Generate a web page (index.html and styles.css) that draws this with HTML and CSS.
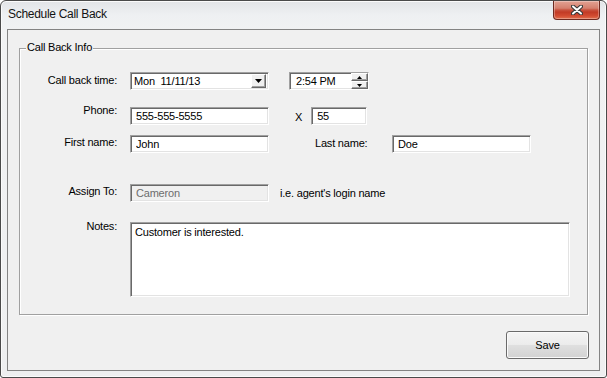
FILE: index.html
```html
<!DOCTYPE html>
<html lang="en">
<head>
<meta charset="utf-8">
<title>Schedule Call Back</title>
<link rel="stylesheet" href="styles.css">
</head>
<body>
<div class="window">
  <div class="titlebar">
    <span class="title">Schedule Call Back</span>
    <button class="close" type="button" aria-label="Close">
      <svg width="12" height="10" viewBox="0 0 12 10"><path d="M2 1.5 L10 8.5 M10 1.5 L2 8.5" stroke="#3a3a3a" stroke-width="4.2" stroke-linecap="round"/><path d="M2 1.5 L10 8.5 M10 1.5 L2 8.5" stroke="#fff" stroke-width="2" stroke-linecap="round"/></svg>
    </button>
  </div>
  <div class="client">
    <div class="group">
      <div class="legend">Call Back Info</div>

      <div class="row row1">
        <label class="lbl lbl1">Call back time:</label>
        <div class="field combo">
          <span class="ctext">Mon  11/11/13</span>
          <span class="rbtn dropbtn"><svg width="7" height="4" viewBox="0 0 7 4"><polygon points="0,0 7,0 3.5,4" fill="#000"/></svg></span>
        </div>
        <div class="field spin">
          <span class="ctext">2:54 PM</span>
          <span class="spinbtns">
            <span class="rbtn sbtn"><svg width="5" height="3" viewBox="0 0 5 3"><polygon points="0,3 5,3 2.5,0" fill="#000"/></svg></span>
            <span class="rbtn sbtn"><svg width="5" height="3" viewBox="0 0 5 3"><polygon points="0,0 5,0 2.5,3" fill="#000"/></svg></span>
          </span>
        </div>
      </div>

      <div class="row row2">
        <label class="lbl lbl2">Phone:</label>
        <input class="field text" type="text" value="555-555-5555">
        <span class="x">X</span>
        <input class="field text ext" type="text" value="55">
      </div>

      <div class="row row3">
        <label class="lbl lbl3">First name:</label>
        <input class="field text" type="text" value="John">
        <label class="lastlbl">Last name:</label>
        <input class="field text" type="text" value="Doe">
      </div>

      <div class="row row4">
        <label class="lbl lbl4">Assign To:</label>
        <input class="field text disabled" type="text" value="Cameron" disabled>
        <span class="hint">i.e. agent's login name</span>
      </div>

      <div class="row row5">
        <label class="lbl lbl5">Notes:</label>
        <textarea class="field notes">Customer is interested.</textarea>
      </div>
    </div>
    <div class="footer">
      <button class="save" type="button">Save</button>
    </div>
  </div>
</div>
</body>
</html>
```
FILE: styles.css
```css
* { box-sizing: border-box; }
html, body { margin: 0; padding: 0; background: #ffffff; }
body {
  font-family: "Liberation Sans", Arial, sans-serif;
  font-size: 11px;
  letter-spacing: -0.2px;
  color: #000;
}

.window {
  width: 607px;
  height: 378px;
  border: 1px solid #4a4a4a;
  border-radius: 6px 6px 3px 3px;
  background: linear-gradient(#e2e4e7 0px, #eef0f2 14px, #f1f2f3 30px, #eeeff0 100%);
  box-shadow: inset 0 0 0 1px #fbfbfb;
  padding: 0 6px 6px 6px;
  display: flex;
  flex-direction: column;
}

.titlebar {
  height: 28px;
  flex: none;
  display: flex;
  justify-content: space-between;
  align-items: flex-start;
}
.title {
  margin: 6px 0 0 1px;
  font-size: 12px;
  line-height: 15px;
  letter-spacing: -0.3px;
  color: #141414;
}
.close {
  width: 47px;
  height: 19px;
  margin: 0;
  padding: 0;
  border: 1px solid #6e2a20;
  border-top: 0;
  border-radius: 0 0 4px 4px;
  background: linear-gradient(#e2a293 0%, #d5806e 40%, #c8523e 50%, #c23b26 62%, #d24b31 82%, #e1704f 100%);
  box-shadow: inset 0 0 0 1px rgba(255, 255, 255, 0.3);
  display: flex;
  align-items: center;
  justify-content: center;
}

.client {
  flex: 1;
  border: 1px solid #838383;
  background: #f0f0f0;
  display: flex;
  flex-direction: column;
}

.group {
  flex: none;
  height: 267px;
  margin: 18px 11px 0 11px;
  border: 1px solid #a0a0a0;
  box-shadow: inset 1px 1px 0 #ffffff, 1px 1px 0 #ffffff;
  display: flex;
  flex-direction: column;
}
.legend {
  align-self: flex-start;
  margin: -8px 0 0 6px;
  padding: 0 1px;
  background: #f0f0f0;
  line-height: 13px;
}

.row {
  flex: none;
  display: flex;
  align-items: flex-start;
  height: 18px;
}
.row1 { margin-top: 18px; }
.row2 { margin-top: 17px; }
.row3 { margin-top: 10px; }
.row4 { margin-top: 31px; }
.row5 { margin-top: 20px; height: 75px; }

.lbl {
  flex: none;
  width: 97px;
  margin-right: 13px;
  text-align: right;
  line-height: 13px;
}
.lbl1 { margin-top: 2px; }
.lbl2 { margin-top: -3px; }
.lbl3 { margin-top: 1px; }
.lbl4 { margin-top: 1px; }
.lbl5 { margin-top: -2px; }

.field {
  flex: none;
  width: 139px;
  height: 18px;
  margin: 0;
  background: #ffffff;
  border: 1px solid;
  border-color: #a0a0a0 #ffffff #ffffff #a0a0a0;
  box-shadow: inset 1px 1px 0 #696969, inset -1px -1px 0 #e3e3e3;
  font: inherit;
  letter-spacing: inherit;
  color: #000;
  line-height: 13px;
}
.text { padding: 0 2px 0 5px; outline: none; }

.combo {
  display: flex;
  align-items: center;
  padding: 0 2px 0 3px;
}
.ctext { flex: 1; white-space: pre; line-height: 13px; }

.rbtn {
  display: flex;
  align-items: center;
  justify-content: center;
  background: #f0f0f0;
  border: 1px solid;
  border-color: #ffffff #696969 #696969 #ffffff;
  box-shadow: inset -1px -1px 0 #a0a0a0;
}
.dropbtn { width: 15px; height: 14px; }

.spin {
  width: 80px;
  margin-left: 20px;
  display: flex;
  align-items: center;
  padding: 0 0 0 6px;
}
.spinbtns {
  display: flex;
  flex-direction: column;
  width: 17px;
  height: 16px;
}
.sbtn { height: 8px; }

.x { margin: 4px 9px 0 26px; line-height: 13px; }
.ext { width: 56px; }

.lastlbl { flex: none; width: 77px; margin: 2px 0 0 46px; line-height: 13px; }

.disabled { background: #f0f0f0; color: #6d6d6d; }
.hint { margin: 3px 0 0 11px; line-height: 13px; }

.notes {
  width: 440px;
  height: 75px;
  padding: 3px 4px;
  resize: none;
  outline: none;
  overflow: hidden;
}

.footer {
  display: flex;
  justify-content: flex-end;
  margin-top: 16px;
  padding-right: 10px;
}
.save {
  width: 83px;
  height: 28px;
  margin: 0;
  padding: 0;
  border: 1px solid #6a6a6a;
  border-radius: 3px;
  background: linear-gradient(#f4f4f4 0%, #ececec 48%, #dfdfdf 52%, #d2d2d2 100%);
  box-shadow: inset 0 0 0 1px #fafafa;
  font: inherit;
  letter-spacing: inherit;
  color: #000;
}
```
